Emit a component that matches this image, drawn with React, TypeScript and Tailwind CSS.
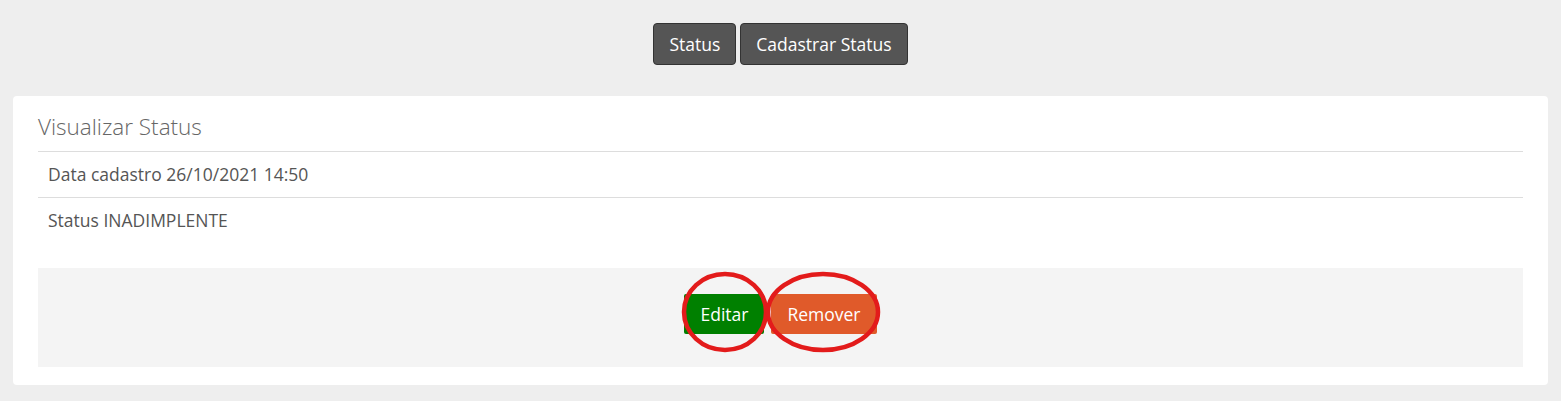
export default function App() {
  return (
    <div
      className="min-h-screen bg-[#eeeeee] px-[13px] pt-[23px] pb-[16px] text-[17.5px] text-[#555]"
      style={{ fontFamily: '"Open Sans", "Liberation Sans", sans-serif' }}
    >
      {/* Top nav */}
      <div className="flex justify-center gap-[4px]">
        <button className="h-[42px] px-[15px] bg-[#555555] border border-[#333] rounded-[4px] text-white">
          Status
        </button>
        <button className="h-[42px] px-[15px] bg-[#555555] border border-[#333] rounded-[4px] text-white">
          Cadastrar Status
        </button>
      </div>

      {/* Card */}
      <div className="mt-[31px] bg-white rounded-[4px] px-[25px] pt-[16px] pb-[18px]">
        <h2 className="pb-[9px] text-[22.5px] leading-[30px] font-light text-[#666]">
          Visualizar Status
        </h2>
        <div className="h-[46px] flex items-center border-t border-[#dddddd] pl-[10px]">
          Data cadastro 26/10/2021 14:50
        </div>
        <div className="h-[46px] flex items-center border-t border-[#dddddd] pl-[10px]">
          Status INADIMPLENTE
        </div>

        {/* Actions */}
        <div className="mt-[25px] h-[99px] bg-[#f4f4f4] flex justify-center pt-[26px]">
          <div className="relative flex gap-[7px] h-[40px]">
            <button className="h-[40px] px-[16px] bg-[#008000] rounded-[2px] text-white">
              Editar
            </button>
            <button className="h-[40px] px-[16px] bg-[#e05a2a] rounded-[2px] text-white">
              Remover
            </button>
            <svg
              className="absolute left-[-10px] top-[-25px] pointer-events-none"
              width="220"
              height="90"
              viewBox="0 0 220 90"
              fill="none"
            >
              <ellipse cx="51" cy="43" rx="41" ry="38" stroke="#e31b1b" strokeWidth="4.5" />
              <ellipse cx="149" cy="43" rx="55" ry="38" stroke="#e31b1b" strokeWidth="4.5" />
            </svg>
          </div>
        </div>
      </div>
    </div>
  );
}
